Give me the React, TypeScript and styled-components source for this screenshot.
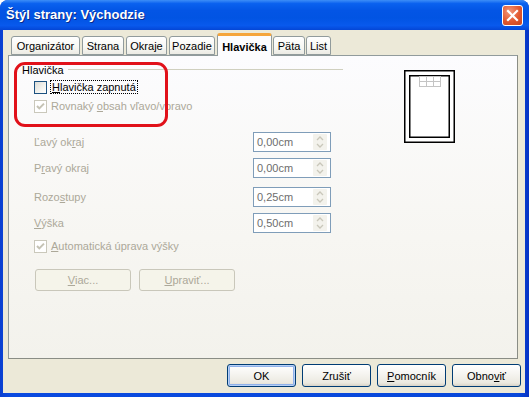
import styled, { createGlobalStyle } from 'styled-components';

const GlobalStyle = createGlobalStyle`
    body {
        margin: 0;
        font-family: 'Liberation Sans', Arial, sans-serif;
        font-size: 11px;
        color: #000;
    }
    * { box-sizing: border-box; }
`;

// Tab name, width and the gap after it
const TABS = [
    { name: 'Organizátor', width: 69, gap: 2 },
    { name: 'Strana', width: 42, gap: 2 },
    { name: 'Okraje', width: 41, gap: 2 },
    { name: 'Pozadie', width: 46, gap: 2 },
    { name: 'Hlavička', width: 55, gap: 1 },
    { name: 'Päta', width: 32, gap: 1 },
    { name: 'List', width: 25, gap: 0 },
];
const ACTIVE_TAB = 'Hlavička';

// Label text with one underlined mnemonic letter
function Mn({ text, at }: { text: string; at: number }) {
    return (
        <>
            {text.slice(0, at)}
            <u>{text[at]}</u>
            {text.slice(at + 1)}
        </>
    );
}

function CheckBox({ checked, disabled }: { checked?: boolean; disabled?: boolean }) {
    return (
        <Box disabled={disabled}>
            {checked && (
                <svg width="11" height="11" viewBox="0 0 11 11">
                    <path
                        d="M2 5 L4.3 7.4 L9 2.6"
                        fill="none"
                        stroke={disabled ? '#c4c2b4' : '#21a121'}
                        strokeWidth="2"
                    />
                </svg>
            )}
        </Box>
    );
}

function SpinField({ value }: { value: string }) {
    return (
        <Field>
            <span>{value}</span>
            <Spin>
                <svg width="14" height="16" viewBox="0 0 14 16">
                    <path d="M4 6 L7 3 L10 6" fill="none" stroke="#c9c7ba" strokeWidth="1.3" />
                    <path d="M4 10 L7 13 L10 10" fill="none" stroke="#c9c7ba" strokeWidth="1.3" />
                </svg>
            </Spin>
        </Field>
    );
}

export default function App() {
    return (
        <>
            <GlobalStyle />
            <Window>
                <TitleBar>
                    <Title>Štýl strany: Východzie</Title>
                    <CloseButton>
                        <svg width="13" height="13" viewBox="0 0 13 13">
                            <path d="M2 2 L11 11 M11 2 L2 11" stroke="#fff" strokeWidth="2.2" strokeLinecap="square" />
                        </svg>
                    </CloseButton>
                </TitleBar>
                <Body>
                    <TabStrip>
                        {TABS.map(t => (
                            <Tab
                                key={t.name}
                                active={t.name === ACTIVE_TAB}
                                style={{ width: t.width, marginRight: t.gap }}
                            >
                                {t.name}
                            </Tab>
                        ))}
                    </TabStrip>
                    <Panel>
                        <Annotation />
                        <LeftCol>
                            <GroupHeader>
                                <span>Hlavička</span>
                                <GroupLine />
                            </GroupHeader>
                            <CheckRow top={1}>
                                <CheckBox />
                                <Focus><Mn text="Hlavička zapnutá" at={0} /></Focus>
                            </CheckRow>
                            <CheckRow top={1} disabled>
                                <CheckBox checked disabled />
                                <span><Mn text="Rovnaký obsah vľavo/vpravo" at={8} /></span>
                            </CheckRow>
                            <FieldRow top={17}>
                                <FieldLabel><Mn text="Ľavý okraj" at={7} /></FieldLabel>
                                <SpinField value="0,00cm" />
                            </FieldRow>
                            <FieldRow top={6}>
                                <FieldLabel><Mn text="Pravý okraj" at={1} /></FieldLabel>
                                <SpinField value="0,00cm" />
                            </FieldRow>
                            <FieldRow top={9}>
                                <FieldLabel><Mn text="Rozostupy" at={4} /></FieldLabel>
                                <SpinField value="0,25cm" />
                            </FieldRow>
                            <FieldRow top={6}>
                                <FieldLabel><Mn text="Výška" at={0} /></FieldLabel>
                                <SpinField value="0,50cm" />
                            </FieldRow>
                            <CheckRow top={4} disabled>
                                <CheckBox checked disabled />
                                <span><Mn text="Automatická úprava výšky" at={0} /></span>
                            </CheckRow>
                            <SmallButtons>
                                <GhostButton><Mn text="Viac..." at={0} /></GhostButton>
                                <GhostButton><Mn text="Upraviť..." at={0} /></GhostButton>
                            </SmallButtons>
                        </LeftCol>
                        <Preview>
                            <svg width="51" height="73" viewBox="0 0 51 73">
                                <rect x="0.75" y="0.75" width="49.5" height="71.5" fill="#fff" stroke="#000" strokeWidth="1.5" />
                                <rect x="5.75" y="5.75" width="39.5" height="61.5" fill="#fff" stroke="#000" strokeWidth="1.5" />
                                <g stroke="#c4c4c4" strokeWidth="1" fill="none">
                                    <rect x="15.5" y="6.5" width="21" height="10" />
                                    <path d="M15.5 11.5 H36.5 M22.5 6.5 V16.5 M29.5 6.5 V16.5" />
                                </g>
                            </svg>
                        </Preview>
                    </Panel>
                    <ButtonBar>
                        <DialogButton primary>OK</DialogButton>
                        <DialogButton>Zrušiť</DialogButton>
                        <DialogButton><Mn text="Pomocník" at={0} /></DialogButton>
                        <DialogButton><Mn text="Obnoviť" at={4} /></DialogButton>
                    </ButtonBar>
                </Body>
            </Window>
        </>
    );
}

// Styled components
const Window = styled.div`
    width: 529px;
    height: 397px;
    display: flex;
    flex-direction: column;
    background: linear-gradient(90deg, #0a3fd0 0%, #0a4ae0 2%, #0847d9 98%, #0733c4 100%);
    border-radius: 8px 8px 0 0;
    overflow: hidden;
`;

const TitleBar = styled.div`
    height: 30px;
    flex: none;
    display: flex;
    align-items: center;
    justify-content: space-between;
    padding: 0 6px 1px 6px;
    background: linear-gradient(
        180deg,
        #3d8ef7 0%,
        #0a61ef 12%,
        #0355e5 35%,
        #0154e3 60%,
        #0859ed 85%,
        #0446d6 100%
    );
`;

const Title = styled.div`
    color: #fff;
    font-family: 'Liberation Sans', Arial, sans-serif;
    font-weight: bold;
    font-size: 13px;
    text-shadow: 1px 1px 0 #0a2a8a;
`;

const CloseButton = styled.div`
    width: 21px;
    height: 21px;
    border: 1px solid #fff;
    border-radius: 3px;
    background: radial-gradient(circle at 35% 30%, #f1977b 0%, #e2582f 55%, #c9461f 100%);
    display: flex;
    align-items: center;
    justify-content: center;
    margin-top: 1px;
`;

const Body = styled.div`
    flex: 1;
    margin: 0 4px 4px 3px;
    background: #ece9d8;
    display: flex;
    flex-direction: column;
    padding-top: 3px;
`;

const TabStrip = styled.div`
    height: 23px;
    display: flex;
    align-items: flex-start;
    padding-left: 8px;
    margin-bottom: -1px;
    position: relative;
    z-index: 2;
`;

const Tab = styled.div<{ active?: boolean }>`
    height: ${({ active }) => (active ? '23px' : '19px')};
    margin-top: ${({ active }) => (active ? '0' : '3px')};
    padding-top: ${({ active }) => (active ? '1px' : '0')};
    flex: none;
    display: flex;
    align-items: center;
    justify-content: center;
    font-weight: ${({ active }) => (active ? 'bold' : 'normal')};
    border: 1px solid #919b9c;
    border-bottom: ${({ active }) => (active ? 'none' : '1px solid #919b9c')};
    border-top: ${({ active }) => (active ? '3px solid #f5a53c' : '1px solid #919b9c')};
    border-radius: 3px 3px 0 0;
    background: ${({ active }) =>
        active ? '#fcfcfe' : 'linear-gradient(180deg, #ffffff 0%, #f7f7f3 60%, #ecebe4 100%)'};
    white-space: nowrap;
`;

const Panel = styled.div`
    position: relative;
    z-index: 1;
    height: 304px;
    flex: none;
    margin: 0 7px 0 5px;
    border: 1px solid #919b9c;
    border-right-color: #8a8d85;
    border-bottom-color: #8a8d85;
    background: linear-gradient(180deg, #fcfcfe 0%, #f7f6f2 60%, #f3f2ec 100%);
    display: flex;
    align-items: flex-start;
`;

const Annotation = styled.div`
    position: absolute;
    left: 5px;
    top: 6px;
    width: 154px;
    height: 65px;
    border: 3px solid #e1111a;
    border-radius: 11px;
    pointer-events: none;
    z-index: 3;
`;

const LeftCol = styled.div`
    width: 334px;
    padding-top: 7px;
    display: flex;
    flex-direction: column;
`;

const GroupHeader = styled.div`
    height: 14px;
    margin-left: 13px;
    display: flex;
    align-items: center;
`;

const GroupLine = styled.div`
    flex: 1;
    margin-left: 4px;
    margin-top: -1px;
    border-top: 1px solid #d0d0bf;
`;

const CheckRow = styled.div<{ top: number; disabled?: boolean }>`
    height: 18px;
    margin-top: ${({ top }) => top}px;
    margin-left: 25px;
    display: flex;
    align-items: center;
    gap: 4px;
    color: ${({ disabled }) => (disabled ? '#aca899' : '#000')};
`;

const Box = styled.div<{ disabled?: boolean }>`
    width: 13px;
    height: 13px;
    flex: none;
    border: 1px solid ${({ disabled }) => (disabled ? '#cac8bb' : '#1c5180')};
    background: ${({ disabled }) =>
        disabled ? '#fff' : 'linear-gradient(135deg, #dcdcd7 0%, #f3f3ef 60%, #ffffff 100%)'};
    display: flex;
    align-items: center;
    justify-content: center;
`;

const Focus = styled.span`
    border: 1px dotted #000;
    padding: 0 1px;
    margin-left: -1px;
    line-height: 12px;
`;

const FieldRow = styled.div<{ top: number }>`
    height: 20px;
    margin-top: ${({ top }) => top}px;
    margin-left: 25px;
    display: flex;
    align-items: center;
`;

const FieldLabel = styled.div`
    width: 219px;
    color: #aca899;
`;

const Field = styled.div`
    width: 78px;
    height: 20px;
    border: 1px solid #7f9db9;
    background: #fff;
    display: flex;
    align-items: center;
    justify-content: space-between;
    padding: 0 3px 0 3px;
    color: #6d6d6d;
`;

const Spin = styled.div`
    width: 14px;
    height: 16px;
    background: #f3f2ec;
    border-radius: 1px;
    display: flex;
`;

const SmallButtons = styled.div`
    margin-top: 14px;
    margin-left: 26px;
    display: flex;
    gap: 8px;
`;

const GhostButton = styled.div`
    width: 96px;
    height: 22px;
    border: 1px solid #c9c7ba;
    border-radius: 3px;
    display: flex;
    align-items: center;
    justify-content: center;
    color: #aca899;
    background: #f5f4ea;
`;

const Preview = styled.div`
    margin-left: 61px;
    margin-top: 14px;
    line-height: 0;
`;

const ButtonBar = styled.div`
    display: flex;
    justify-content: flex-end;
    gap: 6px;
    margin-top: 5px;
    padding-right: 4px;
`;

const DialogButton = styled.div<{ primary?: boolean }>`
    width: 69px;
    height: 23px;
    border: 1px solid #003c74;
    border-radius: 3px;
    display: flex;
    align-items: center;
    justify-content: center;
    background: linear-gradient(180deg, #ffffff 0%, #f6f5f1 40%, #ebe9e0 85%, #d8d3c7 100%);
    box-shadow: ${({ primary }) =>
        primary ? 'inset 0 0 0 1px #b7d0f5, inset 0 0 0 2px #8fb1ea' : 'none'};
`;
